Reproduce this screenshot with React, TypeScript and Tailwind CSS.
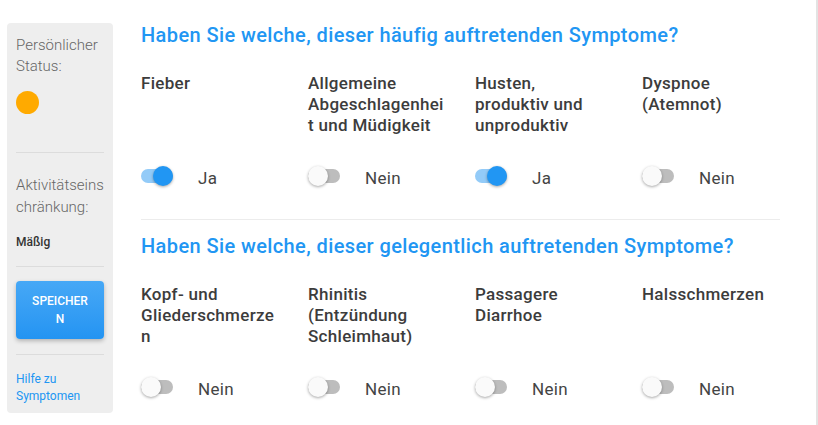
import React, { useState } from 'react';

type Symptom = { label: string; on: boolean };

const frequent: Symptom[] = [
  { label: 'Fieber', on: true },
  { label: 'Allgemeine Abgeschlagenheit und Müdigkeit', on: false },
  { label: 'Husten, produktiv und unproduktiv', on: true },
  { label: 'Dyspnoe (Atemnot)', on: false },
];

const occasional: Symptom[] = [
  { label: 'Kopf- und Gliederschmerzen', on: false },
  { label: 'Rhinitis (Entzündung Schleimhaut)', on: false },
  { label: 'Passagere Diarrhoe', on: false },
  { label: 'Halsschmerzen', on: false },
];

function Toggle({ on, onClick }: { on: boolean; onClick: () => void }) {
  return (
    <button onClick={onClick} className="relative w-[32px] h-[20px] flex items-center shrink-0">
      <span className={`block w-[32px] h-[14px] rounded-full ${on ? 'bg-[#93cbf8]' : 'bg-[#bdbdbd]'}`} />
      <span
        className={`absolute top-0 w-[20px] h-[20px] rounded-full shadow-[0_1px_3px_rgba(0,0,0,0.35)] ${
          on ? 'left-[12px] bg-[#2196f3]' : 'left-0 bg-[#fafafa]'
        }`}
      />
    </button>
  );
}

function SymptomGrid({ items }: { items: Symptom[] }) {
  const [state, setState] = useState(items.map((i) => i.on));
  return (
    <div className="mt-[26px] grid grid-cols-[repeat(4,167px)]">
      {items.map((s, idx) => (
        <div key={s.label} className="pr-[30px]">
          <div className="h-[63px] text-[17px] tracking-[0.3px] leading-[21px] font-medium text-[#3c3c3c] [overflow-wrap:anywhere]">
            {s.label}
          </div>
          <div className="mt-[21px] h-[38px] flex items-center">
            <Toggle on={state[idx]} onClick={() => setState(state.map((v, i) => (i === idx ? !v : v)))} />
            <span className="ml-[25px] mt-[5px] text-[17px] tracking-[0.3px] text-[#444]">
              {state[idx] ? 'Ja' : 'Nein'}
            </span>
          </div>
        </div>
      ))}
    </div>
  );
}

export default function App() {
  return (
    <div className="w-[818px] h-[425px] bg-white flex font-['Roboto',sans-serif] border-r-2 border-[#e3e3e3] overflow-hidden">
      {/* Sidebar */}
      <aside className="ml-[7px] mt-[23px] w-[106px] h-[390px] bg-[#eeeeee] rounded-[4px] px-[9px] pt-[12px] flex flex-col">
        <div className="text-[15px] leading-[21px] font-light text-[#666]">Persönlicher Status:</div>
        <div className="mt-[14px] w-[23px] h-[23px] rounded-full bg-[#ffaa00]" />
        <div className="mt-[38px] border-t border-[#dcdcdc]" />
        <div className="mt-[21px] text-[15px] leading-[22px] font-light text-[#666] [overflow-wrap:anywhere]">
          Aktivitätseinschränkung:
        </div>
        <div className="mt-[16px] text-[12px] leading-[16px] font-medium text-[#333]">Mäßig</div>
        <div className="mt-[16px] border-t border-[#dcdcdc]" />
        <button className="mt-[14px] h-[58px] w-full rounded-[4px] bg-gradient-to-b from-[#46a8f6] to-[#2394f2] shadow-[0_2px_4px_rgba(0,0,0,0.25)] px-[16px] text-white text-[12px] leading-[18px] font-medium [overflow-wrap:anywhere]">
          SPEICHERN
        </button>
        <div className="mt-[15px] border-t border-[#dcdcdc]" />
        <a className="mt-[16px] text-[12px] leading-[17px] text-[#2196f3]">Hilfe zu Symptomen</a>
      </aside>

      {/* Main */}
      <main className="ml-[28px] pt-[23px] flex-1">
        <h2 className="text-[20px] tracking-[0.4px] leading-[24px] font-medium text-[#2196f3]">
          Haben Sie welche, dieser häufig auftretenden Symptome?
        </h2>
        <SymptomGrid items={frequent} />
        <div className="mt-[24px] w-[639px] border-t border-[#ececec]" />
        <h2 className="mt-[14px] text-[20px] tracking-[0.4px] leading-[24px] font-medium text-[#2196f3]">
          Haben Sie welche, dieser gelegentlich auftretenden Symptome?
        </h2>
        <SymptomGrid items={occasional} />
      </main>
    </div>
  );
}
